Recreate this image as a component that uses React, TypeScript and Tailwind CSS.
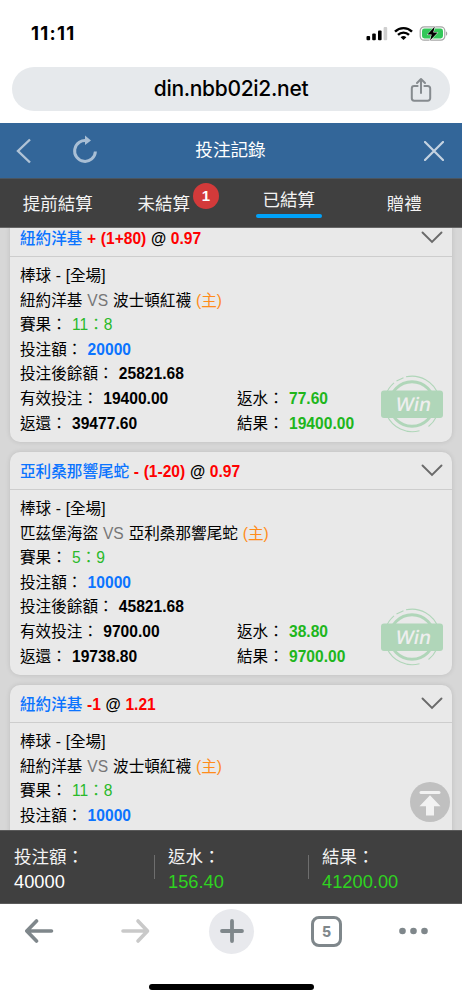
import React from "react";

type Bet = {
  team: string;
  handicap: string;
  odds: string;
  home: string;
  away: string;
  score: string;
  stake: string;
  settled?: {
    balance: string;
    valid: string;
    payout: string;
    rebate: string;
    result: string;
  };
};

const bets: Bet[] = [
  {
    team: "紐約洋基",
    handicap: "+ (1+80)",
    odds: "0.97",
    home: "紐約洋基",
    away: "波士頓紅襪",
    score: "11：8",
    stake: "20000",
    settled: {
      balance: "25821.68",
      valid: "19400.00",
      payout: "39477.60",
      rebate: "77.60",
      result: "19400.00",
    },
  },
  {
    team: "亞利桑那響尾蛇",
    handicap: "- (1-20)",
    odds: "0.97",
    home: "匹茲堡海盜",
    away: "亞利桑那響尾蛇",
    score: "5：9",
    stake: "10000",
    settled: {
      balance: "45821.68",
      valid: "9700.00",
      payout: "19738.80",
      rebate: "38.80",
      result: "9700.00",
    },
  },
  {
    team: "紐約洋基",
    handicap: "-1",
    odds: "1.21",
    home: "紐約洋基",
    away: "波士頓紅襪",
    score: "11：8",
    stake: "10000",
  },
];

const totals = [
  { label: "投注額：", value: "40000", color: "text-white" },
  { label: "返水：", value: "156.40", color: "text-[#2fd321]" },
  { label: "結果：", value: "41200.00", color: "text-[#2fd321]" },
];

const StatusBar = () => (
  <div className="flex h-[67px] items-center justify-between pl-[31px] pr-[14px] font-['Inter',sans-serif]">
    <span className="text-[18.5px] font-bold leading-none tracking-[1.3px]">
      11:11
    </span>
    <svg width="82" height="16" viewBox="0 0 82 16">
      <rect x="0.5" y="10" width="3.6" height="4.2" rx="1" />
      <rect x="6.2" y="7.6" width="3.6" height="6.6" rx="1" />
      <rect x="12" y="4.5" width="3.6" height="9.7" rx="1" />
      <rect x="17.6" y="1" width="3.6" height="13.2" rx="1" fill="#cfcfcf" />
      <g fill="none" stroke="#000" strokeWidth="2.4">
        <path d="M29 5.6a12.2 12.2 0 0 1 17 0" />
        <path d="M32 8.9a7.9 7.9 0 0 1 11 0" />
      </g>
      <path d="M34.6 11.3a4.2 4.2 0 0 1 5.8 0l-2.9 2.8z" />
      <rect
        x="54.2"
        y="0.8"
        width="24.6"
        height="13.4"
        rx="4"
        fill="none"
        stroke="#a6a6a6"
        strokeWidth="1.2"
      />
      <rect x="56" y="2.5" width="21" height="10" rx="2.4" fill="#34c759" />
      <path d="M80 5.4c1.7.5 1.7 3.7 0 4.2z" fill="#a6a6a6" />
      <path
        d="M68.8 0.6 61.4 8.6h4.3l-1.7 6 7.6-8h-4.4z"
        stroke="#fff"
        strokeWidth="1"
        paintOrder="stroke"
      />
    </svg>
  </div>
);

const AddressBar = () => (
  <div className="h-14 px-[12px]">
    <div className="relative flex h-[44px] items-center justify-center rounded-full bg-[#e6e9ec] font-['Inter',sans-serif]">
      <span className="-mt-[2px] text-[21px] font-medium leading-none tracking-[-0.3px]">
        din.nbb02i2.net
      </span>
      <svg
        className="absolute right-[17px] top-[10px]"
        width="24"
        height="26"
        viewBox="0 0 24 26"
        fill="none"
        stroke="#868b8f"
        strokeWidth="2"
        strokeLinecap="round"
        strokeLinejoin="round"
      >
        <path d="M8.6 9H5.2a2.4 2.4 0 0 0-2.4 2.4v9.9a2.4 2.4 0 0 0 2.4 2.4h13.6a2.4 2.4 0 0 0 2.4-2.4v-9.9A2.4 2.4 0 0 0 18.8 9h-3.4" />
        <path d="M12 16V2.5M8 6l4-4 4 4" />
      </svg>
    </div>
  </div>
);

const TitleBar = () => (
  <div className="flex h-[56px] items-center border-b border-[#4a5560] bg-[#336699] text-white">
    <div className="flex flex-1 items-center pl-[15px]">
      <svg width="17" height="26" viewBox="0 0 17 26" fill="none">
        <path
          d="M15 1.5 3 13l12 11.5"
          stroke="#b0c3d6"
          strokeWidth="2.4"
        />
      </svg>
      <svg
        className="-mt-[3px] ml-[40px]"
        width="27"
        height="30"
        viewBox="0 0 27 30"
      >
        <path
          d="M15.5 6.9A10.4 10.4 0 1 0 23.4 17.5"
          fill="none"
          stroke="#a9bfd5"
          strokeWidth="3"
        />
        <path d="M13 1.5 19 6.5 13 11z" fill="#a9bfd5" />
      </svg>
    </div>
    <h1 className="pl-[2px] text-[17.6px]">投注記錄</h1>
    <div className="flex flex-1 justify-end pr-[18px]">
      <svg width="20" height="20" viewBox="0 0 20 20">
        <path
          d="M1 1l18 18M19 1 1 19"
          stroke="#c5d3e1"
          strokeWidth="2.2"
          strokeLinecap="round"
        />
      </svg>
    </div>
  </div>
);

const Tabs = () => (
  <div className="grid h-[49px] grid-cols-4 border-b border-[#666] bg-[#404040] text-[17.5px] leading-[26px] text-[#f3f3f3]">
    <div className="pt-3 text-center">提前結算</div>
    <div className="flex pl-[22px] pt-3">
      未結算
      <span className="-mt-2 ml-[3px] flex size-[26px] items-center justify-center rounded-full bg-[#d33a3a] text-[15px] font-bold text-white">
        1
      </span>
    </div>
    <div className="flex flex-col items-center pt-2">
      已結算
      <span className="mt-[1px] h-[4px] w-[66px] rounded-full bg-[#00a2f9]" />
    </div>
    <div className="pt-3 text-center">贈禮</div>
  </div>
);

const WinStamp = () => (
  <svg
    className="absolute bottom-[9px] right-[8px]"
    width="64"
    height="58"
    viewBox="0 0 64 58"
  >
    <g fill="none" stroke="#b0d6b9">
      <circle cx="32" cy="29" r="22.2" strokeWidth="3" />
      <path
        d="M26 1.8A27.8 27.8 0 0 1 58.3 20M16.5 6l7-3.2M5.7 20A27.8 27.8 0 0 1 14 7.8M7 40.5A27.8 27.8 0 0 0 39.5 55.7M48.5 51.5A27.8 27.8 0 0 0 56.5 41.5"
        strokeWidth="1.1"
      />
    </g>
    <rect x="1" y="15.5" width="62" height="27.5" rx="3" fill="#b0d6b9" />
    <text
      transform="translate(32.5 36) skewX(-11)"
      textAnchor="middle"
      fill="#eeeeee"
      fontFamily="'Open Sans', 'Noto Sans', Lato, sans-serif"
      fontSize="19"
      fontWeight="600"
    >
      Win
    </text>
  </svg>
);

const BetCard = ({ bet }: { bet: Bet }) => (
  <div className="relative h-[223px] shrink-0 rounded-[10px] bg-[#e9e9e9] shadow-[0_0_5px_rgba(0,0,0,0.12)]">
    <div className="flex h-[38px] items-center justify-between border-b border-[#cdcdcd] pl-[10px] pr-[9px]">
      <div className="pt-[2px] font-bold text-[#ff0000] [word-spacing:0.3px]">
        <span className="font-medium text-[#0b74ff]">{bet.team}</span>{" "}
        {bet.handicap} <span className="text-black">@</span> {bet.odds}
      </div>
      <svg width="22" height="13" viewBox="0 0 22 13" fill="none">
        <path
          d="M1.5 1.5 11 11l9.5-9.5"
          stroke="#6a6a6a"
          strokeWidth="1.9"
          strokeLinecap="round"
        />
      </svg>
    </div>
    <div className="px-[10px] pt-[7px] leading-[24.6px]">
      <p className="[word-spacing:0.3px]">棒球 - [全場]</p>
      <p className="[word-spacing:0.6px]">
        {bet.home} <span className="text-[#777]">VS</span> {bet.away}{" "}
        <span className="text-[#ff8c1a]">(主)</span>
      </p>
      <p>
        賽果： <span className="text-[#2ab92a]">{bet.score}</span>
      </p>
      <p>
        投注額： <b className="text-[#0b74ff]">{bet.stake}</b>
      </p>
      {bet.settled && (
        <>
          <p>
            投注後餘額： <b>{bet.settled.balance}</b>
          </p>
          <div className="grid grid-cols-[217px_1fr]">
            <p>
              有效投注： <b>{bet.settled.valid}</b>
            </p>
            <p>
              返水： <b className="text-[#20b61c]">{bet.settled.rebate}</b>
            </p>
            <p>
              返還： <b>{bet.settled.payout}</b>
            </p>
            <p>
              結果： <b className="text-[#20b61c]">{bet.settled.result}</b>
            </p>
          </div>
        </>
      )}
    </div>
    {bet.settled && <WinStamp />}
  </div>
);

const Summary = () => (
  <div className="grid h-[74px] grid-cols-3 items-center border-y border-[#5a5a5a] bg-[#404040]">
    {totals.map((t, i) => (
      <div key={t.label} className="relative pl-[14px] pt-[5px]">
        {i > 0 && (
          <span className="absolute left-0 top-[15px] h-[24px] w-px bg-[#6e6e6e]" />
        )}
        <p className="text-[17.5px] leading-[25px] text-[#f3f3f3]">{t.label}</p>
        <p className={`text-[18.3px] leading-[24px] ${t.color}`}>{t.value}</p>
      </div>
    ))}
  </div>
);

const Toolbar = () => (
  <div className="h-[96px]">
    <div className="flex h-[54px] items-center pl-[25px]">
      <svg width="29" height="26" viewBox="0 0 29 26" fill="none">
        <path
          d="M26.5 13H2.5M11.5 3 1.8 13l9.7 10"
          stroke="#7f878b"
          strokeWidth="3.6"
          strokeLinecap="round"
          strokeLinejoin="round"
        />
      </svg>
      <svg
        className="ml-[67px]"
        width="29"
        height="26"
        viewBox="0 0 29 26"
        fill="none"
      >
        <path
          d="M2 13h24M17 3l9.5 10L17 23"
          stroke="#c9c9c9"
          strokeWidth="3.6"
          strokeLinecap="round"
          strokeLinejoin="round"
        />
      </svg>
      <div className="ml-[59px] flex size-[45px] items-center justify-center rounded-full bg-[#e8e9ed]">
        <svg width="24" height="24" viewBox="0 0 24 24">
          <path
            d="M12 2v20M2 12h20"
            stroke="#7f878b"
            strokeWidth="3.8"
            strokeLinecap="round"
          />
        </svg>
      </div>
      <div className="ml-[57px] flex size-[31px] items-center justify-center rounded-[8px] border-[3px] border-[#7f878b] font-['Inter',sans-serif] text-[14px] font-extrabold text-[#7f878b]">
        5
      </div>
      <svg
        className="ml-[57px]"
        width="29"
        height="8"
        viewBox="0 0 29 8"
        fill="#7f878b"
      >
        <circle cx="3.5" cy="4" r="3.3" />
        <circle cx="14.5" cy="4" r="3.3" />
        <circle cx="25.5" cy="4" r="3.3" />
      </svg>
    </div>
    <div className="mx-auto mt-[26px] h-[6px] w-[165px] rounded-full bg-black" />
  </div>
);

const App = () => {
  return (
    <div className="flex h-[1000px] w-[462px] flex-col overflow-hidden bg-white font-['Liberation_Sans','Noto_Sans_CJK_TC',sans-serif] text-[15.6px] text-black">
      <StatusBar />
      <AddressBar />
      <TitleBar />
      <Tabs />
      <div className="relative min-h-0 flex-1 overflow-hidden bg-[#d7d7d7]">
        <div className="-mt-[9px] flex flex-col gap-[10px] px-[10px] [word-spacing:0.9px]">
          {bets.map((bet, i) => (
            <BetCard key={i} bet={bet} />
          ))}
        </div>
        <svg
          className="absolute bottom-[8px] right-[12px]"
          width="40"
          height="40"
          viewBox="0 0 40 40"
        >
          <circle cx="20" cy="20" r="20" fill="#c0c0c0" />
          <rect x="9.5" y="9" width="21" height="3" rx="1.5" fill="#f2f2f2" />
          <path d="M20 13.3 30.5 24.3H24V33.5h-8V24.3H9.5z" fill="#f2f2f2" />
        </svg>
      </div>
      <Summary />
      <Toolbar />
    </div>
  );
};

export default App;
